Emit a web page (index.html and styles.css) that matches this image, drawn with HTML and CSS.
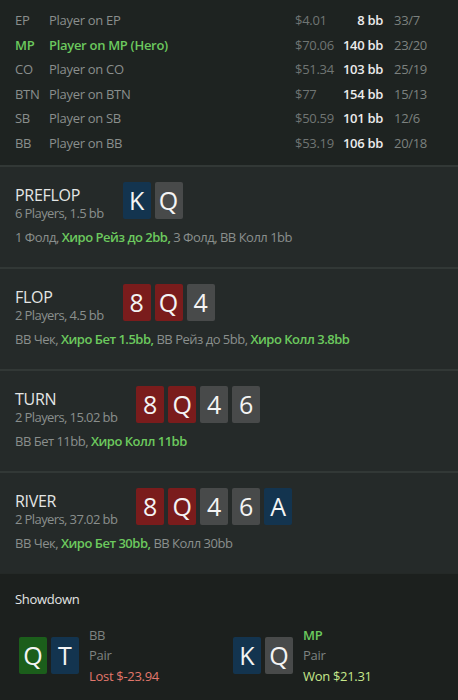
FILE: index.html
```html
<!DOCTYPE html>
<html lang="ru">
<head>
    <meta charset="UTF-8">
    <meta name="viewport" content="width=device-width, initial-scale=1.0">
    <title>Hand history</title>
    <link rel="stylesheet" href="styles.css">
</head>
<body>
<div class="players">
    <div class="player">
        <span class="pos">EP</span><span class="name">Player on EP</span>
        <span class="money">$4.01</span><span class="bb">8 bb</span><span class="stats">33/7</span>
    </div>
    <div class="player hero">
        <span class="pos">MP</span><span class="name">Player on MP (Hero)</span>
        <span class="money">$70.06</span><span class="bb">140 bb</span><span class="stats">23/20</span>
    </div>
    <div class="player">
        <span class="pos">CO</span><span class="name">Player on CO</span>
        <span class="money">$51.34</span><span class="bb">103 bb</span><span class="stats">25/19</span>
    </div>
    <div class="player">
        <span class="pos">BTN</span><span class="name">Player on BTN</span>
        <span class="money">$77</span><span class="bb">154 bb</span><span class="stats">15/13</span>
    </div>
    <div class="player">
        <span class="pos">SB</span><span class="name">Player on SB</span>
        <span class="money">$50.59</span><span class="bb">101 bb</span><span class="stats">12/6</span>
    </div>
    <div class="player">
        <span class="pos">BB</span><span class="name">Player on BB</span>
        <span class="money">$53.19</span><span class="bb">106 bb</span><span class="stats">20/18</span>
    </div>
</div>

<div class="street">
    <div class="street-head">
        <div class="street-info">
            <div class="street-name">PREFLOP</div>
            <div class="street-pot">6 Players, 1.5 bb</div>
        </div>
        <div class="cards">
            <span class="card blue">K</span><span class="card grey">Q</span>
        </div>
    </div>
    <div class="actions">1 Фолд, <b>Хиро Рейз до 2bb,</b> 3 Фолд, BB Колл 1bb</div>
</div>

<div class="street">
    <div class="street-head">
        <div class="street-info">
            <div class="street-name">FLOP</div>
            <div class="street-pot">2 Players, 4.5 bb</div>
        </div>
        <div class="cards">
            <span class="card red">8</span><span class="card red">Q</span><span class="card grey">4</span>
        </div>
    </div>
    <div class="actions">BB Чек, <b>Хиро Бет 1.5bb,</b> BB Рейз до 5bb, <b>Хиро Колл 3.8bb</b></div>
</div>

<div class="street">
    <div class="street-head">
        <div class="street-info">
            <div class="street-name">TURN</div>
            <div class="street-pot">2 Players, 15.02 bb</div>
        </div>
        <div class="cards">
            <span class="card red">8</span><span class="card red">Q</span><span class="card grey">4</span><span class="card grey">6</span>
        </div>
    </div>
    <div class="actions">BB Бет 11bb, <b>Хиро Колл 11bb</b></div>
</div>

<div class="street">
    <div class="street-head">
        <div class="street-info">
            <div class="street-name">RIVER</div>
            <div class="street-pot">2 Players, 37.02 bb</div>
        </div>
        <div class="cards">
            <span class="card red">8</span><span class="card red">Q</span><span class="card grey">4</span><span class="card grey">6</span><span class="card blue">A</span>
        </div>
    </div>
    <div class="actions">BB Чек, <b>Хиро Бет 30bb,</b> BB Колл 30bb</div>
</div>

<div class="showdown">
    <div class="showdown-title">Showdown</div>
    <div class="hands">
        <div class="hand">
            <div class="cards">
                <span class="card green">Q</span><span class="card blue">T</span>
            </div>
            <div class="hand-info">
                <div>BB</div>
                <div>Pair</div>
                <div class="lost">Lost $-23.94</div>
            </div>
        </div>
        <div class="hand">
            <div class="cards">
                <span class="card blue">K</span><span class="card grey">Q</span>
            </div>
            <div class="hand-info">
                <div class="hero-pos">MP</div>
                <div>Pair</div>
                <div class="won">Won $21.31</div>
            </div>
        </div>
    </div>
</div>
</body>
</html>
```

FILE: styles.css
```css
body {
    margin: 0;
    background: #1e2321;
    font-family: "Open Sans", "Noto Sans", sans-serif;
    font-size: 13px;
    color: #8a8f8d;
}
.players {
    padding: 8px 15px 9px;
}
.player {
    display: grid;
    grid-template-columns: 34px 1fr 45px 43px 60px;
    height: 24.6px;
    line-height: 24.6px;
    letter-spacing: -0.3px;
}
.player .money {
    color: #707573;
}
.player .bb {
    color: #ececec;
    font-weight: 600;
    text-align: right;
}
.player .stats {
    padding-left: 11px;
    color: #7c817f;
}
.player.hero .pos,
.player.hero .name {
    color: #6cc95e;
    font-weight: 600;
}
.street {
    background: #252a29;
    border-top: 2px solid #323836;
    padding: 15px 15px 21px;
}
.street-head {
    display: flex;
    align-items: flex-start;
    gap: 19px;
}
.street-info {
    padding-top: 4px;
}
.street-name {
    font-size: 16px;
    line-height: 19px;
    color: #e4e6e5;
    letter-spacing: -0.3px;
}
.street-pot {
    font-size: 13px;
    line-height: 17px;
    letter-spacing: -0.6px;
}
.cards {
    display: flex;
    gap: 4px;
}
.card {
    width: 28px;
    height: 37px;
    line-height: 37px;
    text-align: center;
    border-radius: 2px;
    font-size: 25px;
    color: #f4f4f4;
}
.card.blue { background: #13344f; }
.card.grey { background: #484a4a; }
.card.red { background: #7a1c1c; }
.card.green { background: #1b5e1b; }
.actions {
    margin-top: 6px;
    line-height: 18px;
    letter-spacing: -0.5px;
}
.actions b {
    color: #6cc95e;
    font-weight: 600;
}
.showdown {
    background: #1c201e;
    border-top: 1px solid #242927;
    padding: 16px 15px 20px;
}
.showdown-title {
    color: #e4e6e5;
    line-height: 18px;
    letter-spacing: -0.3px;
}
.hands {
    display: grid;
    grid-template-columns: 1fr 1fr;
    margin-top: 17px;
}
.hand {
    display: flex;
    align-items: center;
    gap: 10px;
    padding-left: 4px;
}
.hand-info {
    line-height: 20.5px;
    letter-spacing: -0.3px;
    color: #7e8381;
}
.hand-info .lost { color: #e2776c; }
.hand-info .won { color: #c6e88c; }
.hand-info .hero-pos {
    color: #6cc95e;
    font-weight: 600;
}
```
